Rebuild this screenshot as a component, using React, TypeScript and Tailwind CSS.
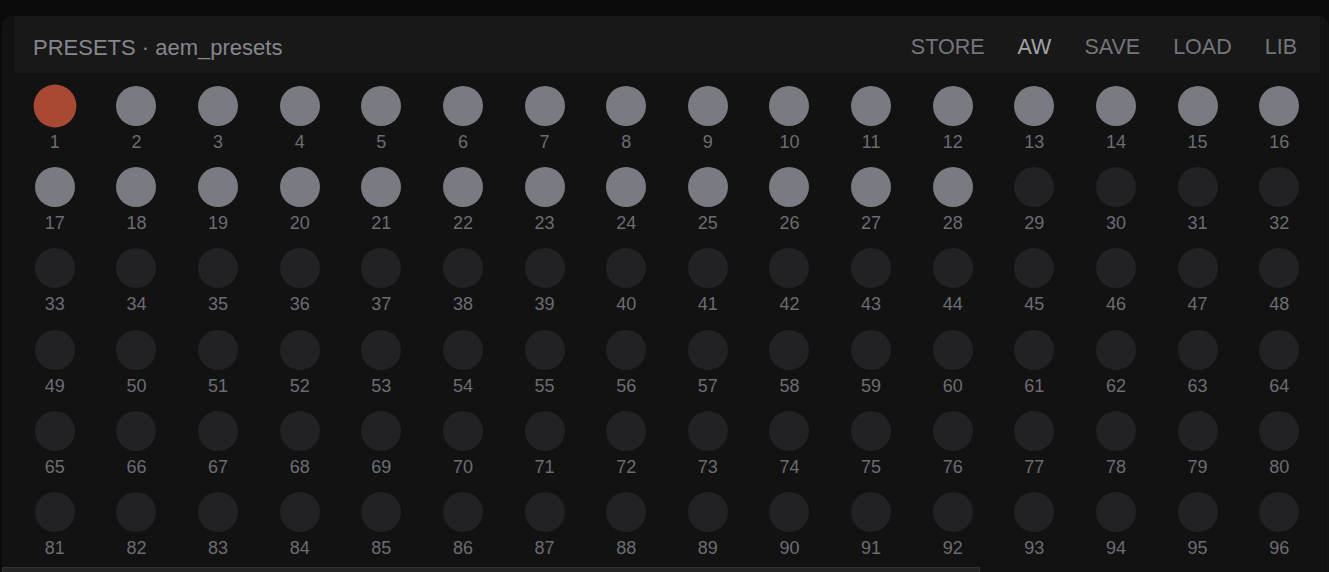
import React from "react";

const ACTIONS = ["STORE", "AW", "SAVE", "LOAD", "LIB"];
const FILLED = 28;
const ACTIVE = 1;

function Slot({ n }: { n: number }) {
  const tone =
    n === ACTIVE
      ? "bg-[#a84a33] scale-[1.07]"
      : n <= FILLED
        ? "bg-[#7a7a83]"
        : "bg-[#222224]";

  return (
    <div className="flex flex-col items-center pt-[12.5px]">
      <div className={`w-10 h-10 rounded-full ${tone}`} />
      <span className="mt-[6px] text-[18px] leading-[20px] text-[#6c6c73]">
        {n}
      </span>
    </div>
  );
}

export default function App() {
  const slots = Array.from({ length: 96 }, (_, i) => i + 1);

  return (
    <div
      className="h-[572px] overflow-hidden bg-[#0b0b0b] pt-4 pl-[2px]"
      style={{ fontFamily: '"Liberation Sans", Arial, sans-serif' }}
    >
      <div className="relative h-[600px] rounded-l-[10px] rounded-tr-[10px] bg-[#121212]">
        <div className="ml-3 w-[1306px]">
          <header className="h-[57px] bg-[#181818] flex items-center justify-between pl-[19px] pr-[23px] pt-[5px] text-[#86868d]">
            <span className="text-[22px]">PRESETS · aem_presets</span>
            <nav className="flex gap-[33px] text-[21.5px]">
              {ACTIONS.map((a) => (
                <button
                  key={a}
                  className={a === "AW" ? "text-[#a3a3aa]" : "text-[#75757c]"}
                >
                  {a}
                </button>
              ))}
            </nav>
          </header>

          <div className="grid grid-cols-16 auto-rows-[81.4px]">
            {slots.map((n) => (
              <Slot key={n} n={n} />
            ))}
          </div>
        </div>

        {/* right edge strip */}
        <div className="absolute top-0 bottom-0 left-[1320px] w-px bg-[#161616]" />

        {/* horizontal scrollbar thumb */}
        <div className="absolute left-0 top-[551px] w-[978px] h-[8px] bg-[#242424] border border-[#303030]" />
      </div>
    </div>
  );
}
